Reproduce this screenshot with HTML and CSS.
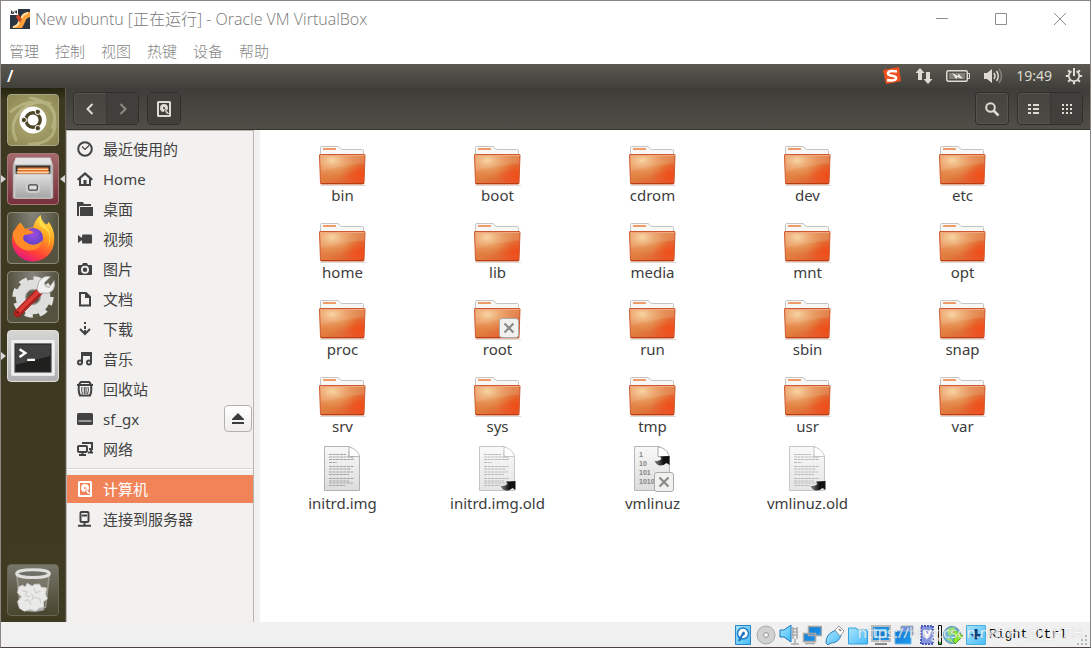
FILE: index.html
```html
<!DOCTYPE html>
<html lang="zh-CN">
<head>
<meta charset="utf-8">
<meta name="viewport" content="width=device-width, initial-scale=1">
<title>New ubuntu - Oracle VM VirtualBox</title>
<link rel="stylesheet" href="styles.css">
</head>
<body>
<svg class="defs" aria-hidden="true">
  <defs>
    <linearGradient id="gFolder" x1="0" y1="0" x2="1" y2="1"><stop offset="0" stop-color="#ee8b55"/><stop offset=".5" stop-color="#e07c3e"/><stop offset="1" stop-color="#e5502a"/></linearGradient>
    <radialGradient id="gGlow" cx=".28" cy=".2" r=".65"><stop offset="0" stop-color="#f6d29a"/><stop offset="1" stop-color="#e88a4a" stop-opacity="0"/></radialGradient>
    <radialGradient id="gRed" cx=".92" cy=".7" r=".45"><stop offset="0" stop-color="#f04e18"/><stop offset="1" stop-color="#f04e18" stop-opacity="0"/></radialGradient>
    <linearGradient id="gPaper" x1="0" y1="0" x2="0" y2="1"><stop offset="0" stop-color="#f8f8f8"/><stop offset="1" stop-color="#dcdcdc"/></linearGradient>
    <linearGradient id="gArrow" x1="0" y1="0" x2="1" y2="0"><stop offset="0" stop-color="#888"/><stop offset=".6" stop-color="#111"/></linearGradient>
    <linearGradient id="gGrey" x1="0" y1="0" x2="0" y2="1"><stop offset="0" stop-color="#e0e0e0"/><stop offset="1" stop-color="#a4a4a4"/></linearGradient>
    <linearGradient id="gBlue" x1="0" y1="0" x2="1" y2="1"><stop offset="0" stop-color="#a8e4ff"/><stop offset="1" stop-color="#46bcf8"/></linearGradient>
    <linearGradient id="gDeep" x1="0" y1="0" x2="1" y2="1"><stop offset="0" stop-color="#1478cc"/><stop offset="1" stop-color="#1c9cf4"/></linearGradient>
    <linearGradient id="gFox" x1=".8" y1="0" x2=".3" y2="1"><stop offset="0" stop-color="#fff04a"/><stop offset=".4" stop-color="#ff9a1e"/><stop offset=".75" stop-color="#ff4038"/><stop offset="1" stop-color="#e31587"/></linearGradient>
    <radialGradient id="gGlobe" cx=".5" cy=".3" r=".7"><stop offset="0" stop-color="#a04ce0"/><stop offset="1" stop-color="#5040c8"/></radialGradient>
    <symbol id="folder" viewBox="1 0 48 48">
      <path d="M2 47.500h46" stroke="#999" stroke-opacity=".35" stroke-width="1"/>
      <path d="M2.500 20V9.500q0-1 1-1h16.500l3.500 3h21q1 0 1 1V20z" fill="#f7f7f5" stroke="#c4c4c2"/>
      <rect x="5" y="10" width="13" height="2" rx=".5" fill="#f09a68"/>
      <path d="M1.500 17q0-.5.5-.5h44.500q.5 0 .5.500L46 45q0 1-1 1H3.500q-1 0-1-1z" fill="url(#gFolder)"/>
      <path d="M1.500 17q0-.5.5-.5h44.500q.5 0 .5.500L46 45q0 1-1 1H3.500q-1 0-1-1z" fill="url(#gRed)"/>
      <path d="M1.500 17q0-.5.5-.5h44.500q.5 0 .5.500L46 45q0 1-1 1H3.500q-1 0-1-1z" fill="url(#gGlow)" stroke="#cf5a30"/>
      <path d="M2.500 17.500h43.500v8Q27 27 2.800 33z" fill="#fff" fill-opacity=".1"/>
      <path d="M2 17.500h44.500" stroke="#f0a880"/><path d="M3 45.500h43" stroke="#b93c12"/>
    </symbol>
    <symbol id="file" viewBox="1 0 48 48">
      <path d="M6.500.5h25L41.500 10v34.500h-35z" fill="url(#gPaper)" stroke="#b2b2b2"/>
      <path d="M31 1v9.500h10.500C40 5 36 2 31 1z" fill="#fff" stroke="#b8b8b8"/><path d="M30 3v8l7 2-5-3z" fill="#aaa" fill-opacity=".45"/>
      <path d="M11 8.500h17M11 11h25M11 13.500h25M11 16.500h8M11 20.500h25M11 23h22M11 26h24M11 28.500h20M11 32.500h25M11 35h20M11 37h24M11 39.500h16" stroke="#a4a4a4" stroke-width="1" stroke-dasharray="3 .6"/>
    </symbol>
    <symbol id="binary" viewBox="1 0 48 48">
      <path d="M6.500.5h25L41.500 10v34.500h-35z" fill="url(#gPaper)" stroke="#b8b8b8"/>
      <path d="M30 1v9.500h11C40 5 36 2 31 1z" fill="#fff" stroke="#aaa"/>
      <g font-family="Liberation Sans, sans-serif" font-size="7" font-weight="bold" fill="#858585"><text x="11" y="11">1</text><text x="11" y="20">10</text><text x="11" y="29">101</text><text x="11" y="38">1010</text></g>
    </symbol>
    <symbol id="link" viewBox="0 0 16 12"><path d="M.5 5.500Q4 7 7.500 4L6 1.500 15.500 1v9l-3-2Q9 11 5.500 10.500 1.500 9.500.5 5.500z" fill="url(#gArrow)"/></symbol>
    <symbol id="denied" viewBox="0 0 20 20"><rect x=".5" y=".5" width="19" height="19" rx="2.500" fill="#f1f1f0" stroke="#aaa"/><path d="M5.500 5.500l9 9M14.500 5.500l-9 9" stroke="#8a8b84" stroke-width="2.200"/></symbol>
    <symbol id="disk" viewBox="0 0 16 16"><path fill-rule="evenodd" d="M2.500 0h11Q15 0 15 1.500v13q0 1.500-1.500 1.500h-11Q1 16 1 14.500v-13Q1 0 2.500 0zM3 2v12h10V2z"/><path fill-rule="evenodd" d="M8 3a4 4 0 0 1 4 4q0 1.500-1 2.500L9.500 8 8.500 9l-.5 2a4 4 0 0 1 0-8zm0 3a1 1 0 1 0 0 2 1 1 0 1 0 0-2z"/><path d="M9.500 9l3 3.500-2-.5z" stroke="currentColor"/></symbol>
  </defs>
</svg>
<div class="window">
  <header class="titlebar">
    <svg class="app-icon" viewBox="0 0 20 20"><path fill="#2c3440" d="M0 0h20v20H0z"/><path d="M1 19q7-1 7.500-6L11 8q2-5 9-5v5q-4 1-5 5l-3 6z" fill="#ff9f38"/><path d="M3 18q5-1 6-5l3-5q1-3 6-4" fill="none" stroke="#ffe0a0" stroke-width="2"/><path d="M8 5l4 5-2 4-4-6z" fill="#cc4a23"/><path d="M0 0h8v6H0z" fill="#fff"/><path d="M1.500 1.500v3h2v-1.500h-2M5 1.500v1.800h2M6.500 1.500v3" fill="none" stroke="#333"/></svg>
    <h1 class="title">New ubuntu [正在运行] - Oracle VM VirtualBox</h1>
    <div class="controls">
      <button aria-label="最小化"><svg viewBox="0 0 12 12"><path d="M0 5.500h12"/></svg></button>
      <button aria-label="最大化"><svg viewBox="0 0 12 12"><path d="M.5.5h11v11H.5z"/></svg></button>
      <button aria-label="关闭"><svg viewBox="0 0 12 12"><path d="M0 0l12 12M12 0L0 12"/></svg></button>
    </div>
  </header>
  <nav class="menubar"><button>管理</button><button>控制</button><button>视图</button><button>热键</button><button>设备</button><button>帮助</button></nav>

  <div class="panel">
    <b class="panel-title">/</b>
    <div class="indicators">
      <svg width="20" height="20" viewBox="0 0 20 20"><path d="M1 4Q9 2.500 17 1l2 14q-8 2-15 3z" fill="#f0501e"/><path d="M15 5.500Q6 4 6 7.500q0 1.800 4 2.300 4.500.6 4 2.700-.8 2.800-9 1.600" fill="none" stroke="#fff" stroke-width="2.600"/></svg>
      <svg width="18" height="18" viewBox="0 0 18 18" fill="#dfdbd2"><path d="M5 1l4.500 5H7v7H3V6H.5zM13 17l-4.500-5H11V5h4v7h2.500z"/></svg>
      <svg width="24" height="14" viewBox="0 0 24 14"><rect x=".8" y="1.800" width="20.500" height="10.500" rx="1.500" fill="none" stroke="#dfdbd2" stroke-width="1.500"/><path d="M3 4h16v6H3z" fill="#817f78"/><path d="M22 4.500h1.500v5H22" fill="none" stroke="#dfdbd2"/><path d="M6 4l6 3 .5-2.500L17 10l-6-2-.5 2.500z" fill="#eeeae2"/></svg>
      <svg width="20" height="18" viewBox="0 0 20 18" fill="none"><path d="M1 6h3l5-4v14l-5-4H1z" fill="#dfdbd2"/><path d="M11 6q2 3 0 6M13.500 4q3.500 5 0 10" stroke="#dfdbd2" stroke-width="1.500"/><path d="M16 2q5 7 0 14" stroke="#85837c" stroke-width="1.500"/></svg>
      <time>19:49</time>
      <svg width="18" height="18" viewBox="0 0 18 18" fill="none" stroke="#dfdbd2"><path d="M6.500 4.200a5.300 5.300 0 1 0 5 0" stroke-width="1.800"/><path d="M9 1v8" stroke-width="2"/><path d="M.8 9h2.700M14.500 9h2.700M3.200 14.800l2-2M14.800 14.800l-2-2M9 14.500v2.700M3.200 3.200l2 2M14.800 3.200l-2 2" stroke-width="2.200"/></svg>
    </div>
  </div>

  <div class="desktop">
    <aside class="launcher">
      <button class="tile tile-dash" aria-label="Dash"><svg viewBox="0 0 52 52"><g fill="none" stroke="#e6e2ba" stroke-opacity=".35" stroke-width="3"><path d="M2 18Q18 4 36 8t10 27M22 3q27 3 27 26T21 51M9 48Q0 31 13 17T45 9"/></g><circle cx="26" cy="26" r="14" fill="#fff"/><circle cx="26" cy="26" r="7.500" fill="none" stroke="#4b4627" stroke-width="3.500"/><g fill="#4b4627" stroke="#fff"><circle cx="16.500" cy="26" r="2.800"/><circle cx="31" cy="17.500" r="2.800"/><circle cx="31" cy="34.500" r="2.800"/></g></svg></button>
      <button class="tile tile-files running focused" aria-label="文件"><svg viewBox="0 0 52 52"><path d="M8 4h36l3 8v34H5V12z" fill="#b7b7b6"/><path d="M8 4h36l2 7H6z" fill="#e2e2e1"/><path d="M8 12h36v10H8z" fill="#39352f"/><path d="M10 14h32v7H10z" fill="#de6e27"/><path d="M10 16h32M9 19h34" stroke="#f7d3a4" stroke-width="1.500"/><path d="M7 21h38v25H7z" fill="url(#gGrey)" stroke="#d0d0d0"/><rect x="20" y="31" width="12" height="8" rx="2" fill="#eee" stroke="#ccc" stroke-width="3"/><rect x="21.500" y="32" width="9" height="5.500" rx="1" fill="#ddd" stroke="#444" stroke-width="1.300"/></svg></button>
      <button class="tile tile-dark" aria-label="Firefox"><svg viewBox="0 0 52 52"><path d="M13 10l5 7q3-2 8-2 2-8 8-13 0 6 6 10 2-1 2-3 7 8 6 20A22 22 0 0 1 4 28Q4 18 13 10z" fill="url(#gFox)"/><circle cx="26" cy="26" r="10.500" fill="url(#gGlobe)"/><path d="M5 20Q10 13 20 17l7 3q-5 3-10 3-3 4 1 7 9 7 18-2-2 12-16 11Q5 35 5 20z" fill="#ff8a28"/><path d="M34 2q-1 7 5 12 9 9 2 22 7-17-7-22-3-5 0-12z" fill="#ffe04a"/></svg></button>
      <button class="tile tile-dark" aria-label="系统设置"><svg viewBox="0 0 52 52"><circle cx="26" cy="26" r="18.500" fill="none" stroke="#e1e1df" stroke-width="6" stroke-dasharray="8 6.520"/><circle cx="26" cy="26" r="13" fill="none" stroke="#dededd" stroke-width="10"/><circle cx="26" cy="26" r="7.500" fill="#5c5948" stroke="#aaa"/><path d="M10 43L35 18" stroke="#aa201e" stroke-width="8" stroke-linecap="round"/><path d="M10 42L34 18" stroke="#dc3c35" stroke-width="4" stroke-linecap="round"/><path d="M33 22l-3-4 2-8q5-7 12-5l-6 6 1 4 4 1 5-7q2 10-6 13z" fill="#f0f0ef" stroke="#aaa"/><circle cx="10" cy="42" r="1.500" fill="#801010"/></svg></button>
      <button class="tile tile-term running" aria-label="终端"><svg viewBox="0 0 52 52"><path d="M4 10h44v36H4z" fill="#eee" stroke="#f8f8f8"/><path d="M7 13h38v30H7z" fill="#20201f" stroke="#777"/><path d="M8 14h36v12L8 35z" fill="#505050" fill-opacity=".7"/><path d="M12 19l6 4-6 4M20 30h8" fill="none" stroke="#fff" stroke-width="2.500"/></svg></button>
      <button class="tile tile-trash" aria-label="回收站"><svg viewBox="0 0 52 52"><path d="M9 10l4 34q13 6 26 0l4-34z" fill="#9c9b8f" fill-opacity=".35" stroke="#9b9a90" stroke-width="1.500"/><ellipse cx="26" cy="46" rx="12" ry="2.500" fill="#aaa"/><path d="M11 23l4-2 3 2 2-4 5 3 3-2 5 0 1 3 6 1-1 7 2 4-4 3v6l-5 1-3 3-6-2-6 2-5-3-2-7 4-5-4-4z" fill="#e9e9e7" stroke="#cececb"/><path d="M15 27l5 1-2 4 5 1M27 24l2 5 5-2M17 38l4-2 3 5M28 34l5 1 1 5M24 30l3 4-3 3" fill="none" stroke="#cfcfcc" stroke-width="1.300"/><ellipse cx="26" cy="9" rx="17" ry="4" fill="#706f67" stroke="#dededc" stroke-width="3"/></svg></button>
    </aside>

    <section class="files">
      <div class="toolbar">
        <div class="group"><button aria-label="后退"><svg viewBox="0 0 16 16"><path d="M10.500 3L5.500 8l5 5" fill="none" stroke="currentColor" stroke-width="2"/></svg></button><button disabled aria-label="前进"><svg viewBox="0 0 16 16"><path d="M5.500 3l5 5-5 5" fill="none" stroke="currentColor" stroke-width="2"/></svg></button></div>
        <div class="group"><button class="pressed" aria-label="计算机"><svg viewBox="0 0 16 16"><use href="#disk"/></svg></button></div>
        <div class="group push"><button aria-label="搜索"><svg viewBox="0 0 16 16"><circle cx="6.500" cy="6.500" r="4.300" fill="none" stroke="currentColor" stroke-width="2"/><path d="M9.500 9.500l5 5" stroke="currentColor" stroke-width="2.500"/></svg></button></div>
        <div class="group"><button aria-label="列表"><svg viewBox="0 0 16 16"><path d="M2 3h3v2H2zm5 0h6v2H7zM2 7h3v2H2zm5 0h6v2H7zM2 11h3v2H2zm5 0h6v2H7z"/></svg></button><button class="pressed" aria-label="图标"><svg viewBox="0 0 16 16"><path d="M3 3h2v2H3zm4 0h2v2H7zm4 0h2v2h-2zM3 7h2v2H3zm4 0h2v2H7zm4 0h2v2h-2zM3 11h2v2H3zm4 0h2v2H7zm4 0h2v2h-2z"/></svg></button></div>
      </div>
      <div class="browser">
        <nav class="places">
          <a href="#"><svg viewBox="0 0 16 16" class="line"><circle cx="8" cy="8" r="6.800"/><path d="M5 5.500L8 8.500l4-4" stroke-width="1.200"/></svg>最近使用的</a>
          <a href="#"><svg viewBox="0 0 16 16"><path d="M8 1l8 7-1 1.200h-1V15H2V9.200H1L0 8zm0 3L4 7.500V13h2.500V9h3v4H12V7.500z"/></svg>Home</a>
          <a href="#"><svg viewBox="0 0 16 16"><path d="M0 1h6l1 2h7v2H3L2 6v9H0zM3 6h13v9H3z"/></svg>桌面</a>
          <a href="#"><svg viewBox="0 0 16 16"><rect x="5" y="3.500" width="10" height="9" rx="1"/><path d="M1 4l4 3v2l-4 3z"/></svg>视频</a>
          <a href="#"><svg viewBox="0 0 16 16"><path fill-rule="evenodd" d="M2 4h3l1-2h4l1 2h3q1 0 1 1v8q0 1-1 1H2q-1 0-1-1V5q0-1 1-1zm6 .8a4 4 0 1 0 0 8 4 4 0 1 0 0-8z"/><circle cx="8" cy="8.800" r="2.200"/></svg>图片</a>
          <a href="#"><svg viewBox="0 0 16 16" class="line"><path d="M3 2h6l4 4v8.500H3zM9 2v4h4"/></svg>文档</a>
          <a href="#"><svg viewBox="0 0 16 16" class="line"><path d="M8 1v2M8 5v3M8 9v3M3 8l5 5 5-5"/></svg>下载</a>
          <a href="#"><svg viewBox="0 0 16 16" class="line"><circle cx="3" cy="11.500" r="2"/><circle cx="12" cy="11.500" r="2"/><path d="M5 11.500V2h9v9.500M5 4h9"/></svg>音乐</a>
          <a href="#"><svg viewBox="0 0 16 16" class="line"><path d="M0 4h16M2 3l2-2h8l2 2M2 5q-1 5 1 9.500h10Q15 10 14 5"/><path d="M5 6q-1 3 .5 7M7.300 6v7M9 6v7M11 6q1 3-.5 7" stroke-width="1"/></svg>回收站</a>
          <div class="mount"><a href="#"><svg viewBox="0 0 16 16"><path fill-rule="evenodd" d="M1.500 2h13Q16 2 16 3.500v9q0 1.500-1.500 1.500h-13Q0 14 0 12.500v-9Q0 2 1.500 2zM1.500 9.500v1h13v-1z"/></svg>sf_gx</a><button aria-label="弹出"><svg viewBox="0 0 16 16"><path d="M8 2l6 6v1H2V8zM2 11h12v2H2z"/></svg></button></div>
          <a href="#"><svg viewBox="0 0 16 16" class="line"><rect x="1" y="5" width="9" height="6" rx="1"/><path d="M6 3V2h9v6h-3M2 14h7M5.500 11v3" /><path d="M11 11.500h5M14 8v4"/></svg>网络</a>
          <hr>
          <a href="#" class="selected" aria-current="page"><svg viewBox="0 0 16 16"><use href="#disk"/></svg>计算机</a>
          <a href="#"><svg viewBox="0 0 16 16" class="line"><rect x="3.500" y="1" width="8" height="10" rx="1"/><path d="M5 4.500h5M7.500 11v4M1 14.800h13"/></svg>连接到服务器</a>
        </nav>
        <main class="grid">
          <a href="#" class="entry"><span class="pic"><svg><use href="#folder"/></svg></span>bin</a>
          <a href="#" class="entry"><span class="pic"><svg><use href="#folder"/></svg></span>boot</a>
          <a href="#" class="entry"><span class="pic"><svg><use href="#folder"/></svg></span>cdrom</a>
          <a href="#" class="entry"><span class="pic"><svg><use href="#folder"/></svg></span>dev</a>
          <a href="#" class="entry"><span class="pic"><svg><use href="#folder"/></svg></span>etc</a>
          <a href="#" class="entry"><span class="pic"><svg><use href="#folder"/></svg></span>home</a>
          <a href="#" class="entry"><span class="pic"><svg><use href="#folder"/></svg></span>lib</a>
          <a href="#" class="entry"><span class="pic"><svg><use href="#folder"/></svg></span>media</a>
          <a href="#" class="entry"><span class="pic"><svg><use href="#folder"/></svg></span>mnt</a>
          <a href="#" class="entry"><span class="pic"><svg><use href="#folder"/></svg></span>opt</a>
          <a href="#" class="entry"><span class="pic"><svg><use href="#folder"/></svg></span>proc</a>
          <a href="#" class="entry"><span class="pic"><svg><use href="#folder"/></svg><svg class="badge denied"><use href="#denied"/></svg></span>root</a>
          <a href="#" class="entry"><span class="pic"><svg><use href="#folder"/></svg></span>run</a>
          <a href="#" class="entry"><span class="pic"><svg><use href="#folder"/></svg></span>sbin</a>
          <a href="#" class="entry"><span class="pic"><svg><use href="#folder"/></svg></span>snap</a>
          <a href="#" class="entry"><span class="pic"><svg><use href="#folder"/></svg></span>srv</a>
          <a href="#" class="entry"><span class="pic"><svg><use href="#folder"/></svg></span>sys</a>
          <a href="#" class="entry"><span class="pic"><svg><use href="#folder"/></svg></span>tmp</a>
          <a href="#" class="entry"><span class="pic"><svg><use href="#folder"/></svg></span>usr</a>
          <a href="#" class="entry"><span class="pic"><svg><use href="#folder"/></svg></span>var</a>
          <a href="#" class="entry"><span class="pic"><svg><use href="#file"/></svg></span>initrd.img</a>
          <a href="#" class="entry"><span class="pic linked"><svg><use href="#file"/></svg><svg class="badge arrow low"><use href="#link"/></svg></span>initrd.img.old</a>
          <a href="#" class="entry"><span class="pic"><svg><use href="#binary"/></svg><svg class="badge arrow high"><use href="#link"/></svg><svg class="badge denied"><use href="#denied"/></svg></span>vmlinuz</a>
          <a href="#" class="entry"><span class="pic linked"><svg><use href="#file"/></svg><svg class="badge arrow low"><use href="#link"/></svg></span>vmlinuz.old</a>
        </main>
      </div>
    </section>
  </div>

  <footer class="statusbar">
    <svg viewBox="0 0 20 20"><path d="M2.500.5h15v19h-15z" fill="url(#gBlue)" stroke="#2b83c8"/><circle cx="10" cy="8.500" r="5.500" fill="#fff" stroke="#237cc6" stroke-width="1.500"/><path d="M10 6.500a2 2 0 1 1 0 4l-3 6-2-1z" fill="#176fbd"/></svg>
    <svg viewBox="0 0 20 20"><circle cx="10" cy="10" r="9" fill="#d1d1d1" stroke="#aaa"/><circle cx="10" cy="10" r="2.500" fill="#eee" stroke="#999"/></svg>
    <svg viewBox="0 0 20 20"><path d="M14 2v12M18 2v12M13 4h6M13 7h6M13 10h6M16 14v5M12 19h8" stroke="#aaa" stroke-width="1.500"/><path d="M1 5h4l7-5v17l-7-5H1z" fill="url(#gBlue)" stroke="#1675bb"/></svg>
    <svg viewBox="0 0 20 20"><path d="M6.500 1.500h13v9h-13zM1.500 8.500h12v8h-12zM3 18.500h10" fill="url(#gDeep)" stroke="#a5a5a5" stroke-width="1.500"/></svg>
    <svg viewBox="0 0 20 20"><path d="M1 18q0-8 6-11l4-2 5 5q-2 8-10 8l-3 2z" fill="url(#gBlue)" stroke="#3280b8"/><path d="M10 5l4-4 5 5-4 5z" fill="#fff" stroke="#999"/><path d="M14 4l2 2" stroke="#777" stroke-width="1.500"/></svg>
    <svg viewBox="0 0 20 20"><path d="M.5 19V3H8l2 2h9.500v14z" fill="url(#gBlue)" stroke="#32a0e0"/></svg>
    <svg viewBox="0 0 20 20"><path d="M1 1h18v15H1z" fill="#1a8ee2" stroke="#bbb" stroke-width="2"/><path d="M5 5h10v7H5z" fill="#167bd0" stroke="#b0e7ff" stroke-width="1.500"/><path d="M4 19h12" stroke="#888" stroke-width="2"/></svg>
    <svg viewBox="0 0 20 20"><path d="M7 1h12v9H7z" fill="#6b90dc" stroke="#aaa"/><path d="M1 6h16v13H1z" fill="url(#gDeep)" stroke="#7ab5e0"/></svg>
    <svg viewBox="0 0 20 20"><path d="M4 1h12v18H4z" fill="#8795df" stroke="#4a5db8" stroke-width="2" stroke-dasharray="2 1"/><path d="M7 5l3 7 4-7" fill="none" stroke="#fff" stroke-width="2.500"/></svg>
    <svg class="meter" viewBox="0 0 4 20"><path d="M.5.5h3v19h-3z" fill="#eee" stroke="#111"/><path d="M1 17h2v2H1z" fill="#35ca30"/></svg>
    <svg viewBox="0 0 20 20"><circle cx="9" cy="10" r="8.500" fill="#69b9dc" stroke="#5b8eaa"/><path d="M4 4l7-2 2 6-7 3zM3 14l5-1 2 5" fill="#9ee06b"/><path d="M12 5l8 6-8 8-2-4 3-3-3-3z" fill="#8ee830" stroke="#56a823"/></svg>
    <svg viewBox="0 0 20 20"><path d="M.5.5h19v19H.5z" fill="url(#gBlue)" stroke="#4ab0e0"/><path d="M10 4v8" stroke="#073f7a" stroke-width="3"/><path d="M4.500 9h11L10 15z" fill="#073f7a"/></svg>
    <span class="hostkey">Right Ctrl</span>
    <svg class="grip" viewBox="0 0 12 12" fill="#b9b9b9"><path d="M9 0h2v2H9zM5 4h2v2H5zm4 0h2v2H9zM1 8h2v2H1zm4 0h2v2H5zm4 0h2v2H9z"/></svg>
    <span class="watermark">https://blog.csdn.net/Hugh_HZH</span>
  </footer>
</div>
</body>
</html>
```
FILE: styles.css
```css
* { box-sizing: border-box; }
body { margin: 0; font: 15px/20px "Noto Sans", "Noto Sans CJK SC", sans-serif; color: #3c3c3c; }
button { margin: 0; padding: 0; border: 0; background: none; font: inherit; color: inherit; }
a { color: inherit; text-decoration: none; }
svg { display: block; flex: none; }
.defs { position: absolute; width: 0; height: 0; }

.window {
  display: flex; flex-direction: column; min-height: 100vh; background: #fff;
  border: 1px solid #8d8580; border-bottom-color: #4b4142;
}
.titlebar { display: flex; align-items: center; height: 36px; padding: 0 1px 0 9px; }
.app-icon { width: 20px; height: 20px; }
.title { flex: 1; margin: 0 0 0 5px; font: 300 16px/20px "Open Sans", "Noto Sans CJK SC", sans-serif; color: #787878; white-space: nowrap; }
.controls { display: flex; }
.controls button { display: grid; place-items: center; width: 59px; height: 36px; }
.controls svg { width: 12px; height: 12px; fill: none; stroke: #8f8f8f; }
.menubar { display: flex; align-items: center; gap: 16px; height: 27px; padding-left: 8px; font-weight: 300; color: #858585; }

.panel {
  display: flex; align-items: center; justify-content: space-between; height: 24px; padding: 0 7px 0 6px;
  background: linear-gradient(#5b5951, #403f3a); color: #dfdbd2;
}
.panel-title { font-size: 16px; font-weight: 600; color: #fff; }
.indicators { display: flex; align-items: center; gap: 13px; font-size: 14px; }

.desktop { display: flex; flex: 1; }
.launcher {
  display: flex; flex-direction: column; gap: 7px; width: 65px; padding: 6px 6px 6px;
  background: linear-gradient(#25230f, #3c3920 12px, #3e3b22); border-right: 1px solid #5d554c;
}
.tile { position: relative; width: 52px; height: 52px; border: 1px solid #8c8a76; border-radius: 4px; }
.tile svg { width: 50px; height: 50px; }
.tile-dash { background: radial-gradient(#b3ad79, #8b8650); border-color: #aaa785; }
.tile-files { background: linear-gradient(#a36a6c, #76303a); border-color: #a87578; }
.tile-dark { background: radial-gradient(at 50% 0, #85837b, #55533f 70%); }
.tile-term { background: linear-gradient(#d5d5d4, #b0b0b0); border-color: #dedede; }
.tile-trash { margin-top: auto; background: linear-gradient(#77756a, #49462f); border-color: #696754; }
.running::before, .focused::after { content: ""; position: absolute; top: 21px; border: 4px solid transparent; }
.running::before { left: -7px; border-left: 5px solid #d8d8d5; border-right: 0; }
.focused::after { right: -7px; border-right: 5px solid #d8d8d5; border-left: 0; }

.files { display: flex; flex: 1; flex-direction: column; min-width: 0; }
.toolbar {
  display: flex; align-items: center; gap: 8px; height: 42px; padding: 0 7px;
  background: linear-gradient(#3e3d39, #504e47); border-bottom: 1px solid #35342f; color: #dfdbd2;
}
.group { display: flex; border: 1px solid #302f2b; border-radius: 4px; background: linear-gradient(#454440, #4d4b44); box-shadow: 0 0 0 1px #56544c inset; }
.push { margin-left: auto; }
.group button { display: grid; place-items: center; width: 32px; height: 31px; }
.group button + button { border-left: 1px solid #383733; }
.group button:disabled { color: #8e8b83; background: #403f3b; }
.group .pressed { background: #403f3b; }
.group svg { width: 16px; height: 16px; fill: currentColor; }

.browser { display: flex; flex: 1; background: #fff; }
.places { width: 188px; padding-top: 4px; background: #f2f1f0; border: 1px solid #b9b5b0; border-bottom: 0; }
.places a { display: flex; align-items: center; gap: 10px; height: 28px; margin: 0 0 2px; padding-left: 10px; color: #424242; }
.places svg { width: 16px; height: 16px; fill: currentColor; }
.places .line { fill: none; stroke: currentColor; stroke-width: 2; }
.places hr { height: 2px; margin: 5px 0; border: 0; border-top: 1px solid #d5d3d1; background: #fff; }
.places .selected { background: #f08458; color: #fff; }
.mount { display: flex; justify-content: space-between; padding-right: 1px; }
.mount button { display: grid; place-items: center; width: 28px; height: 27px; border: 1px solid #b4b1ae; border-radius: 4px; background: linear-gradient(#fff, #eeedec); }

.grid {
  display: grid; flex: 1; grid-template-columns: repeat(auto-fill, 155px); grid-auto-rows: 77px; align-content: start;
  padding: 8px 0 0 5px; border-left: 6px solid #f2f1f0;
}
.entry { display: flex; flex-direction: column; align-items: center; }
.pic { position: relative; width: 48px; height: 47px; }
.pic > svg { width: 48px; height: 48px; }
.linked > svg:first-child { opacity: .75; }
.pic .badge { position: absolute; }
.pic .denied { width: 20px; height: 20px; right: 3px; bottom: 1px; }
.pic .arrow { width: 16px; height: 12px; }
.low { right: 6px; bottom: 1px; }
.high { right: 7px; top: 9px; }

.statusbar { position: relative; display: flex; align-items: center; justify-content: flex-end; gap: 3px; height: 25px; padding-right: 2px; background: #f0f0f0; }
.statusbar svg { width: 20px; height: 20px; }
.statusbar .meter { width: 4px; margin: 0 -2px; }
.statusbar .grip { width: 12px; height: 12px; align-self: flex-end; margin-left: 6px; }
.hostkey { font: 13px/20px "Liberation Mono", monospace; color: #000; white-space: nowrap; }
.watermark { position: absolute; right: 7px; top: 0; font: 15px/20px "Open Sans", sans-serif; color: #fff; opacity: .75; text-shadow: 0 0 1px #999; pointer-events: none; }
```
